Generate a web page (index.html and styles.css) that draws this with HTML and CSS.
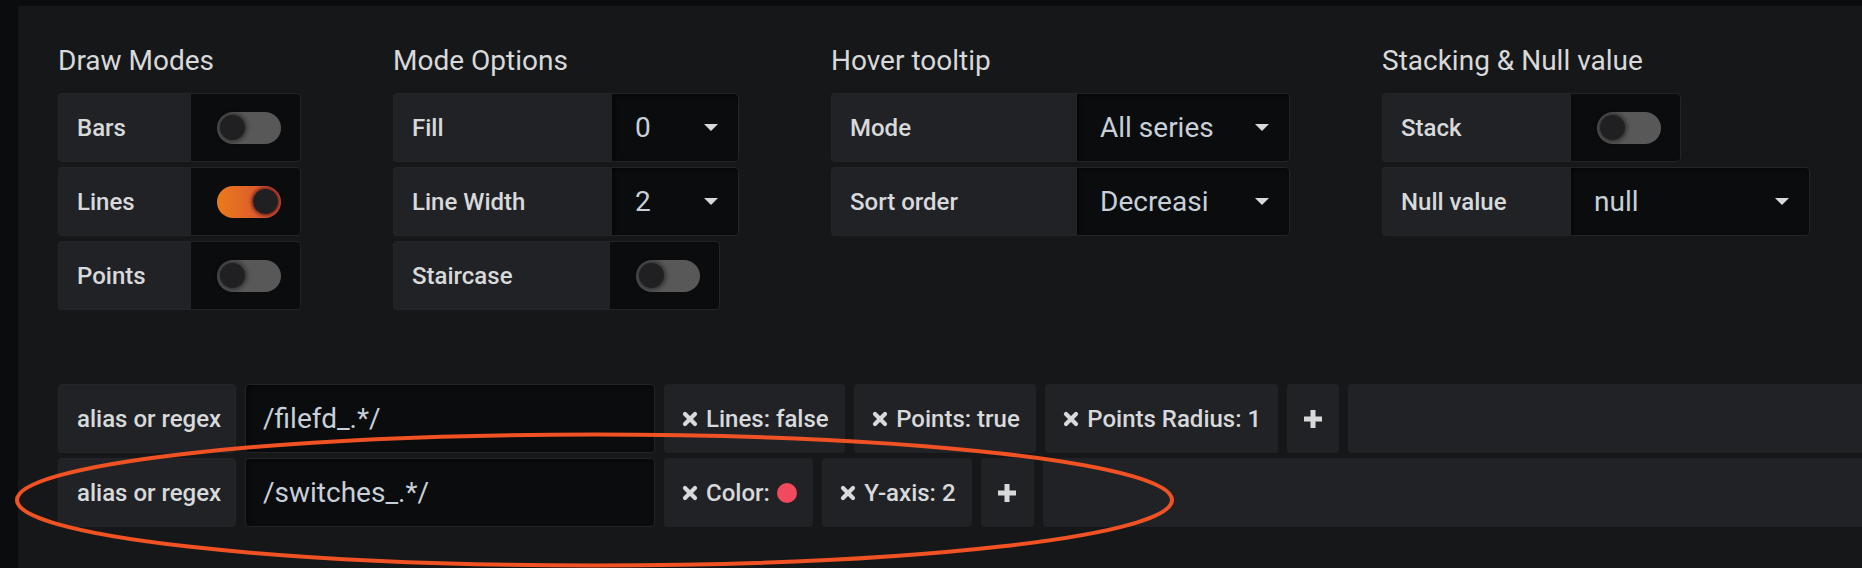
FILE: index.html
```html
<!DOCTYPE html>
<html lang="en">
<head>
<meta charset="utf-8">
<title>Graph display options</title>
<link rel="stylesheet" href="styles.css">
</head>
<body>
<div class="page">
  <div class="panel">
    <div class="sections">
      <div class="section">
        <h5 class="section-title">Draw Modes</h5>
        <div class="form-row">
          <div class="form-label w-132">Bars</div>
          <div class="switch-cell"><span class="switch"><span class="knob"></span></span></div>
        </div>
        <div class="form-row">
          <div class="form-label w-132">Lines</div>
          <div class="switch-cell"><span class="switch switch-on"><span class="knob"></span></span></div>
        </div>
        <div class="form-row">
          <div class="form-label w-132">Points</div>
          <div class="switch-cell"><span class="switch"><span class="knob"></span></span></div>
        </div>
      </div>

      <div class="section">
        <h5 class="section-title">Mode Options</h5>
        <div class="form-row">
          <div class="form-label w-218">Fill</div>
          <div class="select w-128"><span class="select-value">0</span><span class="caret"></span></div>
        </div>
        <div class="form-row">
          <div class="form-label w-218">Line Width</div>
          <div class="select w-128"><span class="select-value">2</span><span class="caret"></span></div>
        </div>
        <div class="form-row">
          <div class="form-label w-216">Staircase</div>
          <div class="switch-cell"><span class="switch"><span class="knob"></span></span></div>
        </div>
      </div>

      <div class="section">
        <h5 class="section-title">Hover tooltip</h5>
        <div class="form-row">
          <div class="form-label w-245">Mode</div>
          <div class="select w-214"><span class="select-value">All series</span><span class="caret"></span></div>
        </div>
        <div class="form-row">
          <div class="form-label w-245">Sort order</div>
          <div class="select w-214"><span class="select-value">Decreasi</span><span class="caret"></span></div>
        </div>
      </div>

      <div class="section">
        <h5 class="section-title">Stacking &amp; Null value</h5>
        <div class="form-row">
          <div class="form-label w-188">Stack</div>
          <div class="switch-cell"><span class="switch"><span class="knob"></span></span></div>
        </div>
        <div class="form-row">
          <div class="form-label w-188">Null value</div>
          <div class="select w-240"><span class="select-value">null</span><span class="caret"></span></div>
        </div>
      </div>
    </div>

    <div class="overrides">
      <div class="override-row">
        <div class="form-label alias-label">alias or regex</div>
        <div class="text-input">/filefd_.*/</div>
        <div class="chip"><svg class="x-icon" viewBox="0 0 16 16"><path d="M3 3L13 13M13 3L3 13"/></svg>Lines: false</div>
        <div class="chip"><svg class="x-icon" viewBox="0 0 16 16"><path d="M3 3L13 13M13 3L3 13"/></svg>Points: true</div>
        <div class="chip"><svg class="x-icon" viewBox="0 0 16 16"><path d="M3 3L13 13M13 3L3 13"/></svg>Points Radius: 1</div>
        <div class="chip chip-add"><svg class="plus-icon" viewBox="0 0 20 20"><path d="M10 1V19M1 10H19"/></svg></div>
        <div class="chip chip-grow"></div>
      </div>
      <div class="override-row">
        <div class="form-label alias-label">alias or regex</div>
        <div class="text-input">/switches_.*/</div>
        <div class="chip"><svg class="x-icon" viewBox="0 0 16 16"><path d="M3 3L13 13M13 3L3 13"/></svg>Color:<span class="color-dot"></span></div>
        <div class="chip"><svg class="x-icon" viewBox="0 0 16 16"><path d="M3 3L13 13M13 3L3 13"/></svg>Y-axis: 2</div>
        <div class="chip chip-add"><svg class="plus-icon" viewBox="0 0 20 20"><path d="M10 1V19M1 10H19"/></svg></div>
        <div class="chip chip-grow"></div>
      </div>
    </div>
  </div>

  <svg class="annotation" width="1862" height="568" viewBox="0 0 1862 568">
    <ellipse cx="594.5" cy="500" rx="577.5" ry="65.5"/>
  </svg>
</div>
</body>
</html>
```

FILE: styles.css
```css
html, body {
  margin: 0;
  padding: 0;
  background: #0b0c0e;
  overflow: hidden;
}

body {
  font-family: Roboto, "Liberation Sans", Arial, sans-serif;
  color: #d8d9da;
}

.page {
  position: relative;
  width: 1862px;
  height: 568px;
  overflow: hidden;
}

.panel {
  box-sizing: border-box;
  margin: 6px -60px 0 18px;
  height: 620px;
  background: #161719;
  border-radius: 3px;
  padding: 38px 0 0 40px;
}

.sections {
  display: flex;
  align-items: flex-start;
}

.section {
  display: flex;
  flex-direction: column;
  align-items: flex-start;
  margin-right: 92px;
}

.section-title {
  margin: 0 0 15px 0;
  font-size: 28px;
  line-height: 34px;
  font-weight: 400;
  color: #d8d9da;
}

.form-row {
  display: flex;
  height: 69px;
  margin-bottom: 5px;
}

.form-label {
  box-sizing: border-box;
  display: flex;
  align-items: center;
  padding-left: 18px;
  background: #202226;
  border: 1px solid #232529;
  border-right: none;
  border-radius: 4px 0 0 4px;
  font-size: 24px;
  font-weight: 500;
  color: #d8d9da;
  white-space: nowrap;
}

.w-132 { width: 132px; }
.w-188 { width: 188px; }
.w-216 { width: 216px; }
.w-218 { width: 218px; }
.w-245 { width: 245px; }
.w-128 { width: 128px; }
.w-214 { width: 214px; }
.w-240 { width: 240px; }

.switch-cell {
  box-sizing: border-box;
  width: 111px;
  display: flex;
  align-items: center;
  padding-left: 26px;
  background: #0b0c0e;
  border: 1px solid #222428;
  border-radius: 0 4px 4px 0;
}

.switch {
  box-sizing: border-box;
  display: flex;
  align-items: center;
  justify-content: flex-start;
  width: 64px;
  height: 32px;
  padding: 0 3px;
  border-radius: 16px;
  background: #585858;
}

.switch-on {
  justify-content: flex-end;
  background: linear-gradient(90deg, #eb7b18, #d44a3a);
}

.knob {
  width: 25px;
  height: 25px;
  border-radius: 50%;
  background: #202022;
  box-shadow: 0 0 4px 2px rgba(0, 0, 0, 0.45);
}

.switch-on .knob {
  box-shadow: 0 0 3px 2px rgba(60, 10, 10, 0.55);
}

.select {
  box-sizing: border-box;
  display: flex;
  align-items: center;
  justify-content: space-between;
  padding: 0 20px 0 23px;
  background: #0b0c0e;
  border: 1px solid #222428;
  border-radius: 0 4px 4px 0;
  box-shadow: inset 2px 2px 4px rgba(0, 0, 0, 0.5);
  font-size: 28px;
  color: #c7d0d9;
  white-space: nowrap;
  overflow: hidden;
}

.caret {
  width: 0;
  height: 0;
  border-left: 7px solid transparent;
  border-right: 7px solid transparent;
  border-top: 7px solid #d8d9da;
}

.overrides {
  margin-top: 69px;
}

.override-row {
  display: flex;
  gap: 9px;
  height: 69px;
  margin-bottom: 5px;
}

.alias-label {
  width: 178px;
  border-radius: 4px;
  border-right: 1px solid #232529;
}

.text-input {
  box-sizing: border-box;
  width: 410px;
  display: flex;
  align-items: center;
  padding-left: 17px;
  background: #0b0c0e;
  border: 1px solid #222428;
  border-radius: 4px;
  box-shadow: inset 2px 2px 4px rgba(0, 0, 0, 0.5);
  font-size: 28px;
  color: #c7d0d9;
  white-space: nowrap;
}

.chip {
  box-sizing: border-box;
  display: flex;
  align-items: center;
  padding: 0 16.5px 0 18px;
  background: #202226;
  border-radius: 4px;
  font-size: 24px;
  font-weight: 500;
  color: #d8d9da;
  white-space: nowrap;
}

.x-icon {
  width: 16px;
  height: 16px;
  margin-right: 8px;
  fill: none;
  stroke: #d8d9da;
  stroke-width: 4.2;
  stroke-linecap: round;
}

.color-dot {
  width: 20px;
  height: 20px;
  margin-left: 7px;
  border-radius: 50%;
  background: #f2495c;
}

.chip-add {
  width: 52.5px;
  padding: 0;
  justify-content: center;
}

.plus-icon {
  width: 20px;
  height: 20px;
  fill: none;
  stroke: #d8d9da;
  stroke-width: 5;
}

.chip-grow {
  flex: 1;
  padding: 0;
}

.annotation {
  position: absolute;
  left: 0;
  top: 0;
  pointer-events: none;
}

.annotation ellipse {
  fill: none;
  stroke: #f05224;
  stroke-width: 4;
}
```
